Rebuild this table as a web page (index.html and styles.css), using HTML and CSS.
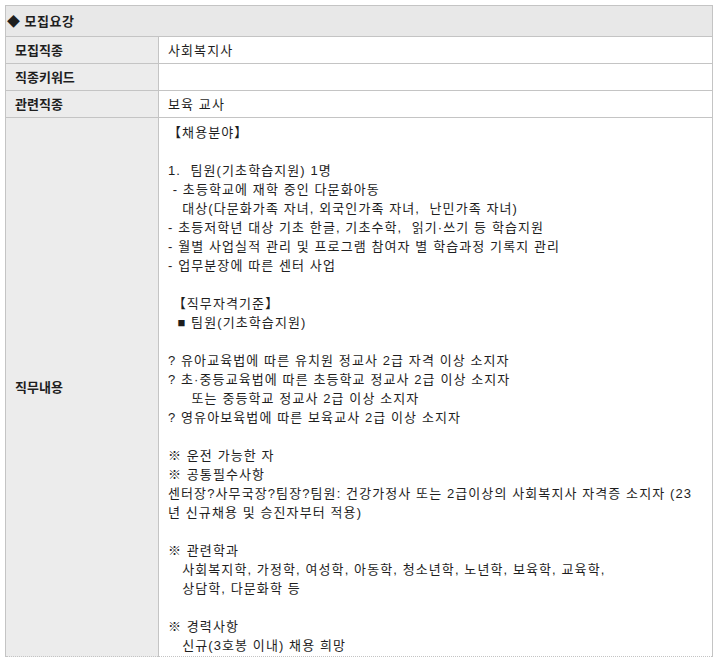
FILE: index.html
```html
<!DOCTYPE html>
<html lang="ko">
<head>
    <meta charset="UTF-8">
    <meta name="viewport" content="width=device-width, initial-scale=1.0">
    <title>모집요강</title>
    <link rel="stylesheet" href="styles.css">
</head>
<body>
    <table class="recruit">
        <colgroup>
            <col class="col-label">
            <col class="col-value">
        </colgroup>
        <tr>
            <th colspan="2" class="title">◆ 모집요강</th>
        </tr>
        <tr>
            <th class="label">모집직종</th>
            <td class="value">사회복지사</td>
        </tr>
        <tr>
            <th class="label">직종키워드</th>
            <td class="value"></td>
        </tr>
        <tr>
            <th class="label">관련직종</th>
            <td class="value">보육 교사</td>
        </tr>
        <tr class="last">
            <th class="label">직무내용</th>
            <td class="value content">【채용분야】

1.  팀원(기초학습지원) 1명
 - 초등학교에 재학 중인 다문화아동
   대상(다문화가족 자녀, 외국인가족 자녀,  난민가족 자녀)
- 초등저학년 대상 기초 한글, 기초수학,  읽기·쓰기 등 학습지원
- 월별 사업실적 관리 및 프로그램 참여자 별 학습과정 기록지 관리
- 업무분장에 따른 센터 사업

 【직무자격기준】
  ■ 팀원(기초학습지원)

? 유아교육법에 따른 유치원 정교사 2급 자격 이상 소지자
? 초·중등교육법에 따른 초등학교 정교사 2급 이상 소지자
     또는 중등학교 정교사 2급 이상 소지자
? 영유아보육법에 따른 보육교사 2급 이상 소지자

※ 운전 가능한 자
※ 공통필수사항
센터장?사무국장?팀장?팀원: 건강가정사 또는 2급이상의 사회복지사 자격증 소지자 (23
년 신규채용 및 승진자부터 적용)

※ 관련학과
   사회복지학, 가정학, 여성학, 아동학, 청소년학, 노년학, 보육학, 교육학,
   상담학, 다문화학 등

※ 경력사항
   신규(3호봉 이내) 채용 희망</td>
        </tr>
    </table>
</body>
</html>
```

FILE: styles.css
```css
body {
    margin: 5px;
    background: #ffffff;
    font-family: "Liberation Sans", "Noto Sans CJK KR", sans-serif;
    font-size: 13px;
    color: #1e1e1e;
}
.recruit {
    width: 708px;
    border-collapse: collapse;
    table-layout: fixed;
}
.col-label {
    width: 153px;
}
.recruit th,
.recruit td {
    border: 1px solid #c4c4c4;
    text-align: left;
    vertical-align: middle;
    line-height: 19px;
}
.title {
    height: 30px;
    padding: 0 0 0 1px;
    background-color: #e8e8e8;
    font-weight: bold;
    letter-spacing: 0.5px;
}
.label {
    height: 26px;
    padding: 0 0 0 9px;
    background-color: #ececec;
    font-weight: bold;
}
.value {
    padding: 0 9px;
    background: #ffffff;
    letter-spacing: 1.1px;
}
.content {
    padding-top: 5px;
    padding-bottom: 1px;
    white-space: pre;
}
.last th,
.last td {
    border-bottom: 1px dotted #c4c4c4;
}
```
